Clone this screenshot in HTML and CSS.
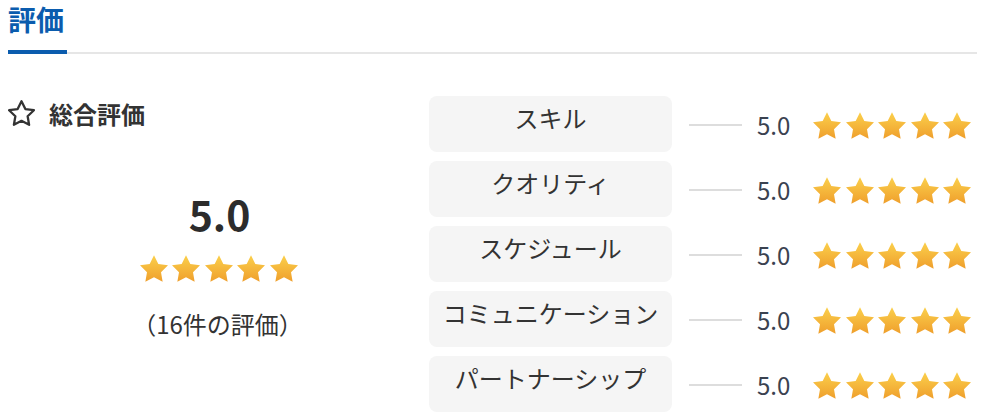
FILE: index.html
```html
<!DOCTYPE html>
<html lang="ja">
<head>
<meta charset="utf-8">
<link rel="stylesheet" href="styles.css">
</head>
<body>
<svg class="defs" width="0" height="0" aria-hidden="true">
  <defs>
    <linearGradient id="starGrad" x1="0" y1="0" x2="0" y2="1">
      <stop offset="0" stop-color="#fbd04c"/>
      <stop offset="1" stop-color="#ef9f2c"/>
    </linearGradient>
    <symbol id="star" viewBox="2 2 20 19.1">
      <path d="M12 2l3.09 6.26L22 9.27l-5 4.87 1.18 6.88L12 17.77l-6.18 3.25L7 14.14 2 9.27l6.91-1.01L12 2z" fill="url(#starGrad)"/>
    </symbol>
  </defs>
</svg>

<header class="tabs">
  <div class="tab">評価</div>
</header>

<section class="rating">
  <div class="overall">
    <div class="overall-head">
      <svg class="outline-star" viewBox="1.8 0.9 22.4 21.4" width="27" height="26">
        <path d="M13 1.8l3.2 6.5 7.1 1-5.2 5 1.2 7.1L13 18.1l-6.3 3.3 1.2-7.1-5.2-5 7.1-1z" fill="none" stroke="#333" stroke-width="1.9" stroke-linejoin="round"/>
      </svg>
      <span class="overall-title">総合評価</span>
    </div>
    <div class="overall-body">
      <div class="overall-score">5.0</div>
      <div class="stars">
        <svg class="star"><use href="#star"/></svg>
        <svg class="star"><use href="#star"/></svg>
        <svg class="star"><use href="#star"/></svg>
        <svg class="star"><use href="#star"/></svg>
        <svg class="star"><use href="#star"/></svg>
      </div>
      <div class="overall-count">（16件の評価）</div>
    </div>
  </div>

  <div class="items">
    <div class="item">
      <div class="label">スキル</div>
      <span class="dash"></span>
      <span class="score">5.0</span>
      <div class="stars">
        <svg class="star"><use href="#star"/></svg>
        <svg class="star"><use href="#star"/></svg>
        <svg class="star"><use href="#star"/></svg>
        <svg class="star"><use href="#star"/></svg>
        <svg class="star"><use href="#star"/></svg>
      </div>
    </div>
    <div class="item">
      <div class="label">クオリティ</div>
      <span class="dash"></span>
      <span class="score">5.0</span>
      <div class="stars">
        <svg class="star"><use href="#star"/></svg>
        <svg class="star"><use href="#star"/></svg>
        <svg class="star"><use href="#star"/></svg>
        <svg class="star"><use href="#star"/></svg>
        <svg class="star"><use href="#star"/></svg>
      </div>
    </div>
    <div class="item">
      <div class="label">スケジュール</div>
      <span class="dash"></span>
      <span class="score">5.0</span>
      <div class="stars">
        <svg class="star"><use href="#star"/></svg>
        <svg class="star"><use href="#star"/></svg>
        <svg class="star"><use href="#star"/></svg>
        <svg class="star"><use href="#star"/></svg>
        <svg class="star"><use href="#star"/></svg>
      </div>
    </div>
    <div class="item">
      <div class="label">コミュニケーション</div>
      <span class="dash"></span>
      <span class="score">5.0</span>
      <div class="stars">
        <svg class="star"><use href="#star"/></svg>
        <svg class="star"><use href="#star"/></svg>
        <svg class="star"><use href="#star"/></svg>
        <svg class="star"><use href="#star"/></svg>
        <svg class="star"><use href="#star"/></svg>
      </div>
    </div>
    <div class="item">
      <div class="label">パートナーシップ</div>
      <span class="dash"></span>
      <span class="score">5.0</span>
      <div class="stars">
        <svg class="star"><use href="#star"/></svg>
        <svg class="star"><use href="#star"/></svg>
        <svg class="star"><use href="#star"/></svg>
        <svg class="star"><use href="#star"/></svg>
        <svg class="star"><use href="#star"/></svg>
      </div>
    </div>
  </div>
</section>
</body>
</html>
```

FILE: styles.css
```css
html, body {
  margin: 0;
  padding: 0;
  background: #fff;
}
body {
  margin: 0 23px 0 8px;
  font-family: "Noto Sans CJK JP", "Noto Sans", sans-serif;
  color: #333;
  overflow: hidden;
}
.defs {
  position: absolute;
  width: 0;
  height: 0;
}
.tabs {
  display: flex;
  border-bottom: 2px solid #e6e6e6;
}
.tab {
  width: 59px;
  height: 52px;
  margin-top: -2px;
  font-size: 28px;
  font-weight: 700;
  line-height: 42px;
  color: #0b5cae;
  border-bottom: 4px solid #0b5cae;
  margin-bottom: -2px;
}
.rating {
  display: flex;
  margin-top: 42px;
}
.overall {
  width: 421px;
  flex: none;
}
.overall-head {
  display: flex;
  align-items: center;
  gap: 14px;
  height: 36px;
}
.outline-star {
  display: block;
  margin-top: -3px;
}
.overall-title {
  font-size: 24px;
  font-weight: 700;
  line-height: 36px;
  margin-top: -1px;
}
.overall-body {
  display: flex;
  flex-direction: column;
  align-items: center;
  margin-top: 57px;
}
.overall-score {
  font-size: 41px;
  font-weight: 700;
  line-height: 48px;
  color: #2c2c2c;
  margin-left: 2px;
}
.overall-body .stars {
  margin-top: 18px;
}
.overall-count {
  font-size: 24px;
  line-height: 34px;
  margin-top: 25px;
  margin-right: 2px;
}
.stars {
  display: flex;
  gap: 4.5px;
}
.star {
  width: 28px;
  height: 27px;
  display: block;
}
.items {
  display: flex;
  flex-direction: column;
  gap: 9px;
}
.item {
  display: flex;
  align-items: center;
}
.label {
  width: 243px;
  height: 56px;
  box-sizing: border-box;
  padding-top: 5px;
  background: #f5f5f5;
  border-radius: 8px;
  text-align: center;
  font-size: 24px;
  line-height: 34px;
  color: #333;
  flex: none;
}
.dash {
  width: 53px;
  height: 2px;
  background: #dddddd;
  margin-left: 17px;
  margin-top: 2px;
}
.score {
  margin-left: 15px;
  margin-right: 23px;
  font-size: 24px;
  line-height: 30px;
  color: #3a4250;
  margin-top: 2px;
}
.item .stars {
  margin-top: 3px;
}
```
